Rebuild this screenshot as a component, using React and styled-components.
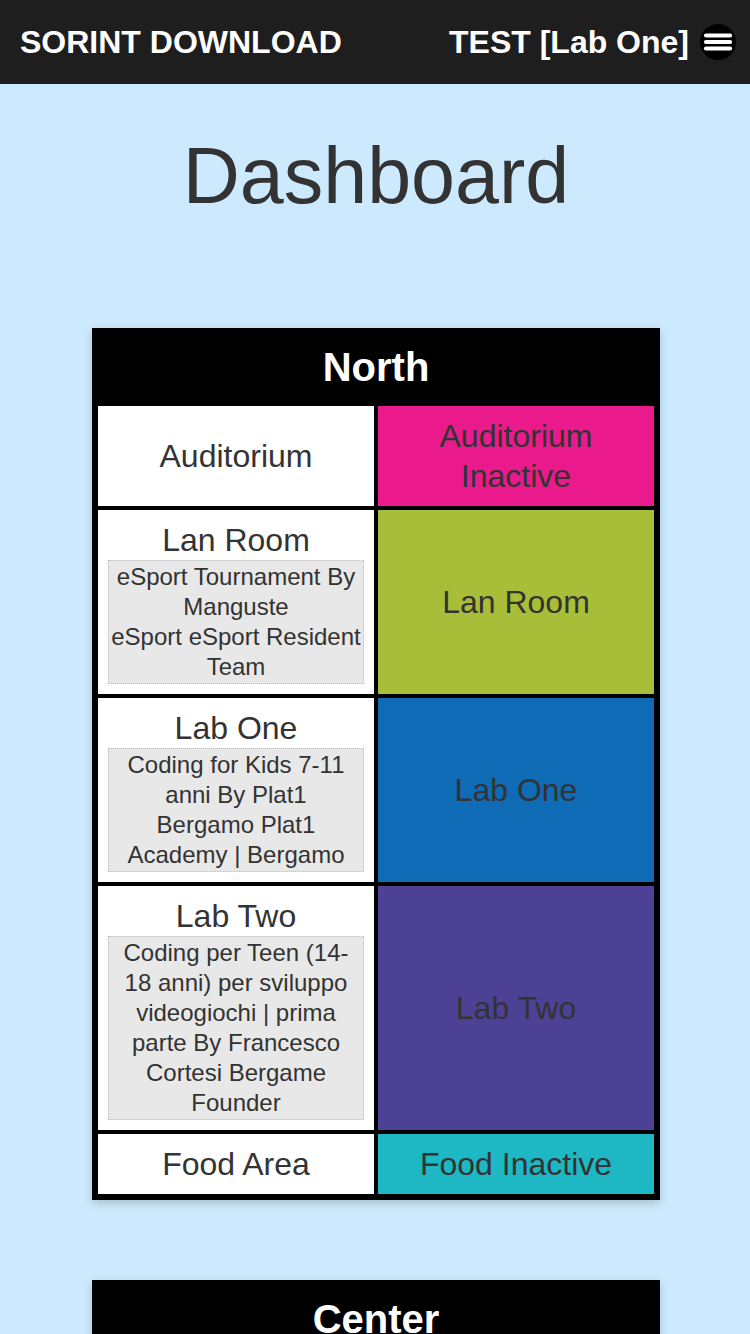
import React from "react";
import styled, { createGlobalStyle } from "styled-components";

const GlobalStyle = createGlobalStyle`
    html, body {
        margin: 0;
        padding: 0;
        background: #cce9fd;
        font-family: "Liberation Sans", Arial, Helvetica, sans-serif;
        color: #333;
    }
`;

const areas = [
    {
        name: "North",
        rooms: [
            { name: "Auditorium", status: "Auditorium Inactive", color: "#ea1a8c" },
            {
                name: "Lan Room",
                status: "Lan Room",
                color: "#a8bd38",
                event: { title: "eSport Tournament", speaker: "Manguste", company: "eSport eSport Resident Team" },
            },
            {
                name: "Lab One",
                status: "Lab One",
                color: "#0f6bb5",
                event: { title: "Coding for Kids 7-11 anni", speaker: "Plat1", company: "Bergamo Plat1 Academy | Bergamo" },
            },
            {
                name: "Lab Two",
                status: "Lab Two",
                color: "#4d4196",
                event: {
                    title: "Coding per Teen (14-18 anni) per sviluppo videogiochi | prima parte",
                    speaker: "Francesco Cortesi Bergame",
                    company: "Founder",
                },
            },
            { name: "Food Area", status: "Food Inactive", color: "#1eb8c5" },
        ],
    },
    {
        name: "Center",
        rooms: [
            { name: "Sala Verde", status: "Sala Verde", color: "#a8bd38" },
            { name: "Sala Blu", status: "Sala Blu Inactive", color: "#ea1a8c" },
        ],
    },
];

function MenuIcon() {
    return (
        <svg width="36" height="36" viewBox="0 0 36 36">
            <circle cx="18" cy="18" r="18" fill="#000" />
            <g stroke="#fff" strokeWidth="4.2" strokeLinecap="round">
                <line x1="6" y1="11.5" x2="30" y2="11.5" />
                <line x1="6" y1="18" x2="30" y2="18" />
                <line x1="6" y1="24.5" x2="30" y2="24.5" />
            </g>
        </svg>
    );
}

export default function App() {
    return (
        <>
            <GlobalStyle />
            <TopBar>
                <Brand>SORINT DOWNLOAD</Brand>
                <UserBox>
                    <span>TEST [Lab One]</span>
                    <MenuButton aria-label="menu"><MenuIcon /></MenuButton>
                </UserBox>
            </TopBar>

            <Main>
                <Title>Dashboard</Title>

                {areas.map((area) => (
                    <AreaTable key={area.name}>
                        <thead>
                            <tr>
                                <AreaHead colSpan={2}>{area.name}</AreaHead>
                            </tr>
                        </thead>
                        <tbody>
                            {area.rooms.map((room) => (
                                <tr key={room.name}>
                                    <RoomCell>
                                        {room.name}
                                        {room.event && (
                                            <EventBox>
                                                {room.event.title} By {room.event.speaker}
                                                <br />
                                                {room.event.company}
                                            </EventBox>
                                        )}
                                    </RoomCell>
                                    <RoomCell $bg={room.color}>{room.status}</RoomCell>
                                </tr>
                            ))}
                        </tbody>
                    </AreaTable>
                ))}
            </Main>
        </>
    );
}

const TopBar = styled.header`
    height: 84px;
    background: #1e1e1e;
    display: flex;
    align-items: center;
    justify-content: space-between;
    padding: 0 14px 0 20px;
    color: #fff;
    font-weight: bold;
    font-size: 32px;
`;

const Brand = styled.div`
    letter-spacing: 0;
`;

const UserBox = styled.div`
    display: flex;
    align-items: center;
    gap: 11px;
`;

const MenuButton = styled.div`
    width: 36px;
    height: 36px;
    display: flex;
    svg { display: block; }
`;

const Main = styled.main`
    display: flex;
    flex-direction: column;
    align-items: center;
    padding: 0 0 80px 2px;
`;

const Title = styled.h1`
    margin: 47px 0 107px;
    font-size: 79px;
    line-height: 90px;
    font-weight: normal;
    color: #333;
`;

const AreaTable = styled.table`
    width: 568px;
    border-collapse: separate;
    border-spacing: 4px;
    border: 2px solid #000;
    background: #000;
    box-shadow: 0 3px 8px rgba(0, 0, 0, 0.18);
    margin-bottom: 80px;
    table-layout: fixed;
`;

const AreaHead = styled.th`
    padding: 8px 10px 10px;
    font-size: 40px;
    line-height: 50px;
    font-weight: bold;
    color: #fff;
    background: #000;
`;

const RoomCell = styled.td`
    padding: 10px;
    font-size: 32px;
    line-height: 40px;
    text-align: center;
    vertical-align: middle;
    color: #333;
    background: ${(p) => p.$bg || "#fff"};
`;

const EventBox = styled.div`
    padding: 1px 2px;
    border: 1px dotted #bdbdbd;
    background: #e8e8e8;
    font-size: 24px;
    line-height: 30px;
    color: #333;
`;
